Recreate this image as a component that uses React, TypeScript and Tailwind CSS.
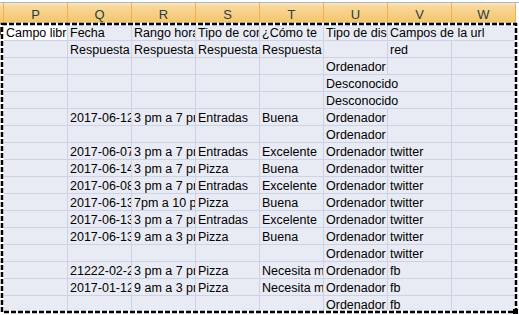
import React from 'react';

const COLS = ['P', 'Q', 'R', 'S', 'T', 'U', 'V', 'W'];

// one row per line of the sheet, columns P..W
const ROWS: string[][] = [
    ['Campo libre', 'Fecha', 'Rango horario', 'Tipo de comida', '¿Cómo te', 'Tipo de dispositivo', 'Campos de la url', ''],
    ['', 'Respuesta', 'Respuesta', 'Respuesta', 'Respuesta', '', 'red', ''],
    ['', '', '', '', '', 'Ordenador', '', ''],
    ['', '', '', '', '', 'Desconocido', '', ''],
    ['', '', '', '', '', 'Desconocido', '', ''],
    ['', '2017-06-12', '3 pm a 7 pm', 'Entradas', 'Buena', 'Ordenador', '', ''],
    ['', '', '', '', '', 'Ordenador', '', ''],
    ['', '2017-06-07', '3 pm a 7 pm', 'Entradas', 'Excelente', 'Ordenador', 'twitter', ''],
    ['', '2017-06-14', '3 pm a 7 pm', 'Pizza', 'Buena', 'Ordenador', 'twitter', ''],
    ['', '2017-06-08', '3 pm a 7 pm', 'Entradas', 'Excelente', 'Ordenador', 'twitter', ''],
    ['', '2017-06-13', '7pm a 10 pm', 'Pizza', 'Buena', 'Ordenador', 'twitter', ''],
    ['', '2017-06-13', '3 pm a 7 pm', 'Entradas', 'Excelente', 'Ordenador', 'twitter', ''],
    ['', '2017-06-13', '9 am a 3 pm', 'Pizza', 'Buena', 'Ordenador', 'twitter', ''],
    ['', '', '', '', '', 'Ordenador', 'twitter', ''],
    ['', '21222-02-21', '3 pm a 7 pm', 'Pizza', 'Necesita mejorar', 'Ordenador', 'fb', ''],
    ['', '2017-01-12', '9 am a 3 pm', 'Pizza', 'Necesita mejorar', 'Ordenador', 'fb', ''],
    ['', '', '', '', '', 'Ordenador', 'fb', ''],
];

const Cell = ({ text, next, active }: { text: string; next?: string; active: boolean }) => {
    // text runs on into an empty neighbour, like Excel does
    const spill = text.length > 9 && next === '';
    return (
        <div
            className={`w-[64px] h-[17px] shrink-0 border-b border-[#cdd3e6] px-[2px] text-[12.5px] leading-[18px] whitespace-nowrap text-black ${
                active ? 'bg-white' : 'bg-[#e9ebf4]'
            } ${spill ? 'relative z-10 overflow-visible border-r-0' : 'overflow-hidden border-r'}`}
        >
            {text}
        </div>
    );
};

export default function App() {
    return (
        <div className="relative w-[519px] h-[315px] overflow-hidden bg-white font-['Liberation_Sans',Arial,sans-serif]">
            <div className="h-[2px] bg-white" />
            <div className="h-px bg-[#9fb9db]" />

            {/* column headers */}
            <div className="flex h-[21px]">
                <div className="w-[4px] shrink-0 border-r border-b border-r-[#eeae55] border-b-[#f29536] bg-[linear-gradient(to_bottom,#fbe9c9_0%,#f9d89c_15%,#f3c56c_100%)]" />
                {COLS.map(c => (
                    <div
                        key={c}
                        className="w-[64px] shrink-0 border-r border-b border-r-[#eeae55] border-b-[#f29536] bg-[linear-gradient(to_bottom,#fbe9c9_0%,#f9d89c_15%,#f3c56c_100%)] pt-[4px] text-center text-[13px] leading-[16px] text-[#27413e]"
                    >
                        {c}
                    </div>
                ))}
                <div className="flex-1 bg-white" />
            </div>

            {ROWS.map((row, r) => (
                <div key={r} className="flex">
                    <div className="w-[4px] h-[17px] shrink-0 bg-white" />
                    {row.map((text, c) => (
                        <Cell key={c} text={text} next={row[c + 1]} active={r === 0 && c === 0} />
                    ))}
                    <div className="flex-1 bg-white" />
                </div>
            ))}

            {/* copy selection marquee */}
            <svg className="absolute left-0 top-0 pointer-events-none z-20" width="519" height="315">
                <rect x="0" y="27" width="1" height="8" fill="#5a1c1c" />
                <rect x="2" y="24" width="514" height="288" fill="none" stroke="#ffffff" strokeWidth="2.5" />
                <rect x="2" y="24" width="514" height="288" fill="none" stroke="#000000" strokeWidth="2.5" strokeDasharray="5 2" />
                <rect x="513" y="309" width="5" height="5" fill="#000000" />
            </svg>
        </div>
    );
}
